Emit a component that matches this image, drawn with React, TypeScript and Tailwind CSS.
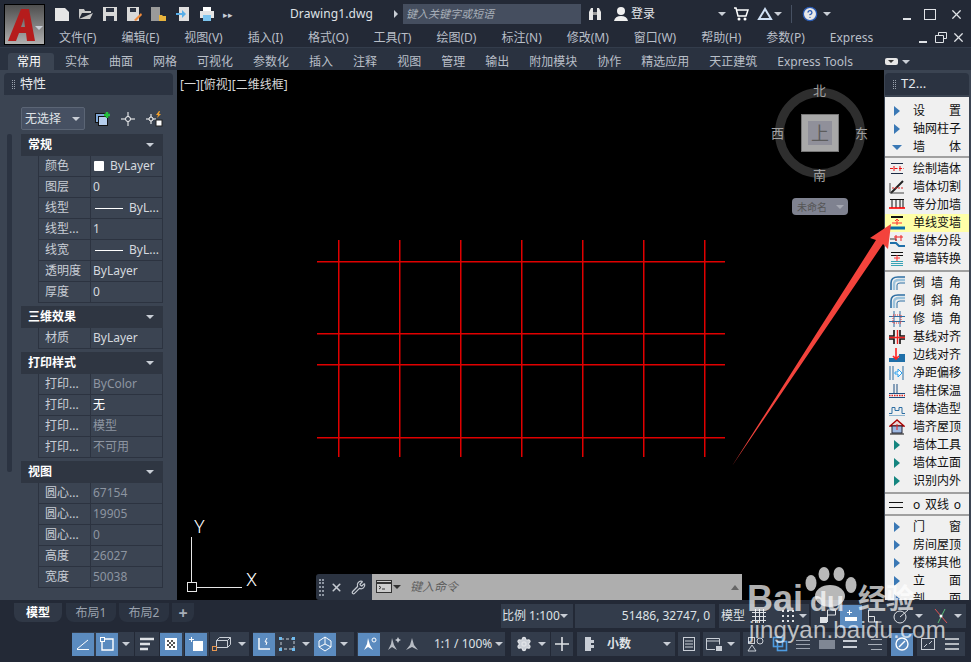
import type { ReactNode } from 'react';
import { HelpCircle, Settings, Wrench, X } from 'lucide-react';

const menus = ['文件(F)', '编辑(E)', '视图(V)', '插入(I)', '格式(O)', '工具(T)', '绘图(D)', '标注(N)', '修改(M)', '窗口(W)', '帮助(H)', '参数(P)', 'Express'];
const tabs = ['实体', '曲面', '网格', '可视化', '参数化', '插入', '注释', '视图', '管理', '输出', '附加模块', '协作', '精选应用', '天正建筑', 'Express Tools'];

type Prop = { label: string; value: string; tone?: string; kind?: 'swatch' | 'line' };
const sections: { title: string; rows: Prop[] }[] = [
  {
    title: '常规',
    rows: [
      { label: '颜色', value: 'ByLayer', kind: 'swatch' },
      { label: '图层', value: '0' },
      { label: '线型', value: 'ByL...', kind: 'line' },
      { label: '线型...', value: '1' },
      { label: '线宽', value: 'ByL...', kind: 'line' },
      { label: '透明度', value: 'ByLayer' },
      { label: '厚度', value: '0' },
    ],
  },
  { title: '三维效果', rows: [{ label: '材质', value: 'ByLayer' }] },
  {
    title: '打印样式',
    rows: [
      { label: '打印...', value: 'ByColor', tone: 'text-[#8d95a1]' },
      { label: '打印...', value: '无', tone: 'text-white' },
      { label: '打印...', value: '模型', tone: 'text-[#8d95a1]' },
      { label: '打印...', value: '不可用', tone: 'text-[#8d95a1]' },
    ],
  },
  {
    title: '视图',
    rows: [
      { label: '圆心...', value: '67154', tone: 'text-[#8d95a1]' },
      { label: '圆心...', value: '19905', tone: 'text-[#8d95a1]' },
      { label: '圆心...', value: '0', tone: 'text-[#8d95a1]' },
      { label: '高度', value: '26027', tone: 'text-[#8d95a1]' },
      { label: '宽度', value: '50038', tone: 'text-[#8d95a1]' },
    ],
  },
];

function Caret({ className = '' }: { className?: string }) {
  return <span className={`inline-block h-0 w-0 border-x-[4px] border-t-[4px] border-x-transparent border-t-[#c9ced6] ${className}`} />;
}

function I({ w = 16, h = 16, children }: { w?: number; h?: number; children: ReactNode }) {
  return (
    <svg width={w} height={h} viewBox={`0 0 ${w} ${h}`} fill="none" className="shrink-0">
      {children}
    </svg>
  );
}

function SectionBlock({ title, rows }: { title: string; rows: Prop[] }) {
  return (
    <div className="mb-[3px]">
      <div className="flex h-[22px] items-center justify-between bg-[#2f3642] pl-[7px] pr-[9px] text-[12px] font-bold text-white">
        {title}
        <Caret />
      </div>
      <div className="ml-[17px] border-l border-[#2c3340]">
        {rows.map((r, i) => (
          <div key={i} className="flex h-[21px] items-center border-b border-r border-[#2c3340] text-[12px] leading-none">
            <div className="w-[51px] shrink-0 whitespace-nowrap pl-[6px] text-[#c9ced6]">{r.label}</div>
            <div className={`flex h-full flex-1 items-center gap-[6px] whitespace-nowrap border-l border-[#2c3340] pl-[2px] ${r.tone ?? 'text-[#d5d9df]'}`}>
              {r.kind === 'swatch' && <span className="ml-[1px] h-[10px] w-[10px] rounded-[1px] bg-white" />}
              {r.kind === 'line' && <span className="ml-[2px] h-px w-[28px] bg-white" />}
              {r.value}
            </div>
          </div>
        ))}
      </div>
    </div>
  );
}

function PropertiesPanel() {
  return (
    <aside className="flex w-[177px] shrink-0 flex-col px-[4px] pt-[3px]">
      <div className="flex h-[22px] items-center gap-[5px] rounded-t-[4px] bg-[#2b3341] pl-[8px] text-[13px] text-[#e4e7eb]">
        <span className="h-[9px] w-[3px] border-x border-dotted border-[#9aa2ad]" />
        特性
      </div>
      <div className="flex-1 rounded-t-[4px] bg-[#3b4452] pl-[3px] pr-[10px] pt-[12px]">
        <div className="flex items-center pl-[14px]">
          <div className="flex h-[23px] w-[70px] items-center justify-between rounded-[2px] border border-[#5b6575] bg-[#465062] pl-[3px] pr-[4px] text-[12px] text-[#dfe2e6]">
            无选择
            <Caret />
          </div>
          <div className="ml-[10px] flex items-center gap-[9px]">
            <I>
              <rect x="0.500" y="2.500" width="9" height="9" fill="#7fa6d6" stroke="#111" />
              <rect x="3.500" y="5.500" width="9" height="9" fill="#b5cdeb" stroke="#111" />
              <path d="M9 4h6M12 1v6" stroke="#25c13d" strokeWidth="2.400" />
            </I>
            <I>
              <circle cx="8" cy="8" r="2.500" stroke="#fff" />
              <path d="M8 1v4M8 11v4M1 8h4M11 8h4" stroke="#fff" />
            </I>
            <I w={18}>
              <circle cx="6" cy="8" r="2" stroke="#fff" />
              <path d="M6 3v3M6 10v3M1 8h3M8 8h3" stroke="#fff" />
              <path d="M14 0l-3 4h2l-1 3 4-4h-2l1-3z" fill="#f1a02c" />
              <rect x="11" y="9" width="6" height="6" fill="#fff" stroke="#222" />
            </I>
          </div>
        </div>
        <div className="mt-[4px] flex">
          <div className="mr-[9px] h-[338px] w-[5px] rounded-[2px] bg-[#2b3341]" />
          <div className="w-[142px]">
            {sections.map((s) => (
              <SectionBlock key={s.title} title={s.title} rows={s.rows} />
            ))}
          </div>
        </div>
      </div>
    </aside>
  );
}

const wallIcons: Record<string, ReactNode> = {
  draw: (
    <I>
      <path d="M2 2.500h12M2 12.500h12" stroke="#1b2a44" />
      <path d="M1 7.500h14" stroke="#e11" strokeDasharray="3 1.500" />
      <path d="M5 5v5M11 5v5" stroke="#e11" />
    </I>
  ),
  cut: (
    <I>
      <path d="M2 14L14 2" stroke="#222" strokeWidth="2" />
      <path d="M1 4v10h14" stroke="#444" />
      <path d="M3 9h12" stroke="#d22" strokeDasharray="2 1" />
    </I>
  ),
  add: (
    <I>
      <path d="M1 2.500h14M3 2v9M7 2v9M11 2v9M14 2v9" stroke="#111" />
      <path d="M0 11h16" stroke="#f00" strokeWidth="1.600" />
    </I>
  ),
  single: (
    <I>
      <path d="M2 2h12" stroke="#111" strokeWidth="2" />
      <path d="M8 4v6M6 6l2-2 2 2" stroke="#f33" />
      <path d="M3 8h10" stroke="#f33" />
      <path d="M0 13h16" stroke="#0a6ea8" strokeWidth="3" />
    </I>
  ),
  split: (
    <I>
      <path d="M1 10h6l3 3h6" stroke="#1f6fa8" strokeWidth="2" />
      <path d="M1 6h6v2" stroke="#333" />
      <path d="M7 2v6M12 2v6M5 4h9" stroke="#e22" />
    </I>
  ),
  curtain: (
    <I>
      <path d="M2 1.500h12M2 4.500h12" stroke="#111" />
      <path d="M8 4v6M5 7h6" stroke="#f33" />
      <path d="M2 10.500h12M2 12.500h12M2 14.500h12" stroke="#39a3b5" />
    </I>
  ),
  corner: (
    <I>
      <path d="M2 15V8Q2 2 9 2h7" stroke="#2d6ea3" strokeWidth="1.600" />
      <path d="M5 15V9Q5 5 10 5h6" stroke="#9cc3dc" strokeWidth="2.400" />
      <path d="M8 15V10Q8 8 11 8h5" stroke="#2d6ea3" />
    </I>
  ),
  trim: (
    <I>
      <path d="M5 0v16M11 0v16M0 5.500h16M0 10.500h16" stroke="#2d6ea3" />
      <rect x="4" y="4" width="8" height="8" stroke="#e33" strokeDasharray="1 1" />
    </I>
  ),
  base: (
    <I>
      <path d="M5 1v6H0M11 1v6h5M5 15V10H0M11 15V10h5" stroke="#111" strokeWidth="1.600" />
      <path d="M8.500 1v14M0 8.500h16" stroke="#e22" strokeWidth="1.400" />
    </I>
  ),
  edge: (
    <I>
      <path d="M0 11h10V7h6v8H0z" fill="#1f6fa8" />
      <path d="M7 1v11M4 9l3 3 3-3" stroke="#f22" strokeWidth="1.600" />
    </I>
  ),
  offset: (
    <I>
      <path d="M1 1v14M4 1v14M14 1v14" stroke="#2d6ea3" />
      <path d="M6 7h3V4l4 4-4 4V9H6z" stroke="#29a0ee" fill="#fff" />
    </I>
  ),
  insulate: (
    <I>
      <path d="M5 1v10M8 1v10" stroke="#1f4f80" />
      <path d="M0 10.500h16" stroke="#1f4f80" />
      <path d="M0 12.500h16" stroke="#d22" strokeWidth="1.400" strokeDasharray="1.500 1" />
      <path d="M0 14.500h16" stroke="#1f4f80" />
    </I>
  ),
  shape: (
    <I>
      <path d="M0 12.500h3V6.500h3v3h4v-3h3v6h3" stroke="#2d6ea3" />
      <path d="M0 14.500h16" stroke="#8fb5d0" />
    </I>
  ),
  roof: (
    <I>
      <path d="M8 1L1 7h14z" fill="#e8d5d5" stroke="#a00" strokeWidth="1.400" />
      <rect x="3" y="7" width="10" height="7" fill="#9db7e0" stroke="#223" />
      <path d="M1 15h14" stroke="#111" />
      <path d="M8 5v6" stroke="#e22" />
    </I>
  ),
};

type Item = { t: string; caret?: 'blue' | 'down' | 'teal'; icon?: string; hl?: boolean };
const wallGroups: { pad: string; items: Item[] }[] = [
  {
    pad: '',
    items: [
      { t: '设置', caret: 'blue' },
      { t: '轴网柱子', caret: 'blue' },
      { t: '墙体', caret: 'down' },
    ],
  },
  {
    pad: 'pb-[2px]',
    items: [
      { t: '绘制墙体', icon: 'draw' },
      { t: '墙体切割', icon: 'cut' },
      { t: '等分加墙', icon: 'add' },
      { t: '单线变墙', icon: 'single', hl: true },
      { t: '墙体分段', icon: 'split' },
      { t: '幕墙转换', icon: 'curtain' },
    ],
  },
  {
    pad: 'pb-[2px]',
    items: [
      { t: '倒墙角', icon: 'corner' },
      { t: '倒斜角', icon: 'corner' },
      { t: '修墙角', icon: 'trim' },
      { t: '基线对齐', icon: 'base' },
      { t: '边线对齐', icon: 'edge' },
      { t: '净距偏移', icon: 'offset' },
      { t: '墙柱保温', icon: 'insulate' },
      { t: '墙体造型', icon: 'shape' },
      { t: '墙齐屋顶', icon: 'roof' },
      { t: '墙体工具', caret: 'teal' },
      { t: '墙体立面', caret: 'teal' },
      { t: '识别内外', caret: 'teal' },
    ],
  },
];
const bottomItems: Item[] = [
  { t: '门窗', caret: 'blue' },
  { t: '房间屋顶', caret: 'blue' },
  { t: '楼梯其他', caret: 'blue' },
  { t: '立面', caret: 'blue' },
  { t: '剖面', caret: 'blue' },
];

function WallRow({ item }: { item: Item }) {
  return (
    <div className={`flex h-[18px] items-center text-[12px] leading-none text-[#111] ${item.hl ? 'bg-[#ffffa8]' : ''}`}>
      <div className="flex w-[24px] shrink-0 items-center justify-center">
        {item.icon && wallIcons[item.icon]}
        {item.caret === 'blue' && <span className="h-0 w-0 border-y-[5px] border-l-[6px] border-y-transparent border-l-[#3a78b5]" />}
        {item.caret === 'teal' && <span className="h-0 w-0 border-y-[5px] border-l-[6px] border-y-transparent border-l-[#14857f]" />}
        {item.caret === 'down' && <span className="h-0 w-0 border-x-[5px] border-t-[5px] border-x-transparent border-t-[#3a78b5]" />}
      </div>
      <div className="ml-[4px] flex w-[48px] justify-between">
        {Array.from(item.t).map((c, i) => (
          <span key={i}>{c}</span>
        ))}
      </div>
    </div>
  );
}

function ToolPanel() {
  return (
    <aside className="flex h-full w-[87px] shrink-0 flex-col pl-[1px] pr-[2px] pt-[3px]">
      <div className="flex h-[22px] shrink-0 items-center gap-[5px] rounded-t-[4px] bg-[#2b3341] pl-[8px] text-[13px] text-[#e4e7eb]">
        <span className="h-[9px] w-[3px] border-x border-dotted border-[#9aa2ad]" />
        T2...
      </div>
      <div className="mt-[2px] flex-1 overflow-hidden bg-[#f0f0f0] pt-[5px]">
        {wallGroups.map((g, i) => (
          <div key={i} className={`mb-[2px] border-b-2 border-[#a0a0a0] ${g.pad}`}>
            {g.items.map((it) => (
              <WallRow key={it.t} item={it} />
            ))}
          </div>
        ))}
        <div className="mb-[2px] flex h-[20px] items-center border-b-2 border-[#a0a0a0] text-[12px] leading-none text-[#111]">
          <span className="ml-[4px] h-[6px] w-[14px] border-y border-[#111]" />
          <span className="ml-[10px] flex w-[48px] justify-between">
            <span>o</span>
            <span>双线</span>
            <span>o</span>
          </span>
        </div>
        {bottomItems.map((it) => (
          <WallRow key={it.t} item={it} />
        ))}
      </div>
    </aside>
  );
}

function ViewCube() {
  return (
    <div className="absolute left-[591px] top-[11px] h-[135px] w-[104px] text-[13px] leading-none text-[#a0a0a0]">
      <div className="absolute left-[7px] top-[7px] h-[90px] w-[90px] rounded-full border-[9px] border-[#2e2e2e]" />
      <div className="absolute left-[33px] top-[33px] flex h-[38px] w-[38px] items-center justify-center border border-[#777] bg-[#a8a8a8]">
        <div className="flex h-[24px] w-[24px] items-center justify-center bg-[#90909a] text-[18px] text-[#5c5c5c]">上</div>
      </div>
      <span className="absolute left-[45px] top-[3px]">北</span>
      <span className="absolute left-[45px] top-[88px]">南</span>
      <span className="absolute left-[3px] top-[46px]">西</span>
      <span className="absolute left-[87px] top-[46px]">东</span>
      <div className="absolute left-[24px] top-[117px] flex h-[17px] w-[56px] items-center justify-between rounded-[4px] bg-[#7f8290] pl-[5px] pr-[4px] text-[10px] text-[#555]">
        未命名
        <span className="h-0 w-0 border-x-[4px] border-t-[4px] border-x-transparent border-t-[#a5a8b2]" />
      </div>
    </div>
  );
}

function CommandLine() {
  return (
    <div className="absolute bottom-0 left-[139px] flex h-[26px] w-[426px]">
      <div className="flex w-[56px] items-center gap-[6px] rounded-l-[3px] bg-[#2b3341] pl-[3px] text-[#c5cad1]">
        <span className="h-[17px] w-[5px] border-x-2 border-dotted border-[#8e96a2]" />
        <X size={13} strokeWidth={3} />
        <Wrench size={15} className="ml-[2px]" />
      </div>
      <div className="flex flex-1 items-center bg-[#aeaeae] pl-[4px] pr-[3px] text-[12px] text-[#5e5e5e]">
        <I>
          <rect x="0.500" y="1.500" width="15" height="12" fill="#ccc" stroke="#333" />
          <path d="M1 4h14" stroke="#333" strokeWidth="2" />
          <path d="M3 7l2 1.500L3 10M6 10h3" stroke="#333" />
        </I>
        <span className="ml-[1px] h-0 w-0 border-x-[4px] border-t-[4px] border-x-transparent border-t-[#333]" />
        <span className="ml-[9px] flex-1 italic">键入命令</span>
        <span className="h-0 w-0 border-x-[4px] border-b-[5px] border-x-transparent border-b-[#666]" />
      </div>
    </div>
  );
}

function Canvas() {
  return (
    <main className="relative flex-1 bg-black">
      <div className="px-[3px] pt-[9px] text-[12px] leading-none text-[#d8d8d8]">[一][俯视][二维线框]</div>
      <svg width="707" height="530" viewBox="177 70 707 530" className="absolute left-0 top-0">
        {[261, 333, 364, 437].map((y) => (
          <line key={y} x1="317" x2="725" y1={y + 0.75} y2={y + 0.75} stroke="#e00000" strokeWidth="1.500" />
        ))}
        {[338, 399, 460, 521, 582, 643, 704].map((x) => (
          <line key={x} x1={x + 0.75} x2={x + 0.75} y1="240" y2="457" stroke="#e00000" strokeWidth="1.500" />
        ))}
        <path d="M191.500 537v50M192 587.500h50" stroke="#e6e6e6" />
        <rect x="187.500" y="582.500" width="9" height="9" stroke="#e6e6e6" />
        <text x="194" y="533" fontSize="18" fontWeight="300" fill="#fff" fontFamily="Roboto">Y</text>
        <text x="246" y="586" fontSize="18" fontWeight="300" fill="#fff" fontFamily="Roboto">X</text>
      </svg>
      <ViewCube />
      <CommandLine />
    </main>
  );
}

function Bt({ on, w = 22, children }: { on?: boolean; w?: number; children?: ReactNode }) {
  return <div className={`flex h-[23px] shrink-0 items-center justify-center ${on ? 'bg-[#5b8bbf]' : ''}`} style={{ width: w }}>{children}</div>;
}

function Grp({ className = '', children }: { className?: string; children: ReactNode }) {
  return <div className={`flex h-[24px] shrink-0 items-center whitespace-nowrap bg-[#333c4b] ${className}`}>{children}</div>;
}

function BottomBars() {
  return (
    <footer className="h-[62px] shrink-0 text-[12px] text-[#dfe2e6]">
      <div className="flex h-[32px] items-start pt-[4px]">
        <div className="-mt-[1px] flex h-[19px] items-center pl-[14px] text-[12px]">
          <div className="flex h-full w-[48px] items-center justify-center rounded-b-[8px] bg-[#303846] font-bold text-white">模型</div>
          <div className="ml-[4px] flex h-full w-[50px] items-center justify-center rounded-b-[8px] bg-[#2b3341] text-[#9aa2ae]">布局1</div>
          <div className="ml-[3px] flex h-full w-[50px] items-center justify-center rounded-b-[8px] bg-[#2b3341] text-[#9aa2ae]">布局2</div>
          <div className="ml-[3px] flex h-full w-[22px] items-center justify-center rounded-br-[8px] bg-[#2b3341] text-[16px] font-bold text-[#a7aeb8]">+</div>
        </div>
        <div className="ml-[307px] flex gap-[2px]">
          <Grp className="w-[72px] justify-between pl-[1px] pr-[5px]">比例 1:100<Caret /></Grp>
          <Grp className="w-[140px] justify-end pr-[5px]">51486, 32747, 0</Grp>
          <Grp className="ml-[2px] w-[90px] pl-[2px]">
            模型
            <span className="ml-[6px] shrink-0">
              <I>
                <path d="M1 4.500h14M1 8.500h14M1 12.500h14M4.500 1v14M8.500 1v14M12.500 1v14" stroke="#dfe2e6" />
              </I>
            </span>
            <span className="ml-[13px] shrink-0">
              <I>
                <path d="M2 3h12M2 8h12M2 13h12" stroke="#dfe2e6" strokeWidth="2" strokeDasharray="2 3" />
              </I>
            </span>
            <Caret className="ml-[3px] shrink-0" />
          </Grp>
          <Grp className="w-[155px] pl-[8px]">
            <I w={20}>
              <rect x="1" y="9" width="7" height="6" fill="#dfe2e6" />
              <path d="M8.500 14V2h8v5h-8" stroke="#dfe2e6" />
            </I>
            <span className="ml-[1px]">
              <Bt on>
                <I>
                  <path d="M6.500 2v5M4 4.500h5" stroke="#fff" />
                  <rect x="2" y="9" width="12" height="4" fill="#fff" />
                </I>
              </Bt>
            </span>
            <span className="ml-[4px]">
              <I>
                <path d="M2.500 2v12h13M2.500 8.500h6v5.500" stroke="#dfe2e6" />
              </I>
            </span>
            <span className="ml-[11px]">
              <I>
                <circle cx="7" cy="9" r="6" stroke="#dfe2e6" />
                <path d="M7 9l8-7" stroke="#dfe2e6" />
              </I>
            </span>
            <Caret className="ml-[6px]" />
            <span className="ml-[10px]">
              <I>
                <path d="M2 1l12 14" stroke="#e05252" />
                <path d="M12 1L5 15" stroke="#5ac27a" />
                <circle cx="8" cy="8" r="1.500" fill="#fff" />
              </I>
            </span>
            <Caret className="ml-[5px]" />
          </Grp>
        </div>
      </div>
      <div className="flex items-center pl-[72px]">
        <Grp className="w-[62px]">
          <Bt on>
            <I>
              <path d="M2 13.500h12M2 13L13 4" stroke="#fff" />
            </I>
          </Bt>
          <span className="ml-[2px]">
            <Bt on>
              <I>
                <path d="M6 3h8v11H3V6" stroke="#fff" strokeWidth="1.400" />
                <rect x="1.500" y="1.500" width="4" height="4" stroke="#fff" />
              </I>
            </Bt>
          </span>
          <Caret className="ml-[4px]" />
        </Grp>
        <Grp className="ml-[1px] w-[24px] justify-center">
          <I>
            <path d="M1 3h14M1 8h10M1 13h8" stroke="#dfe2e6" strokeWidth="2.600" />
          </I>
        </Grp>
        <Grp className="ml-[1px] w-[24px]">
          <Bt on>
            <I>
              <rect x="2" y="2" width="12" height="12" fill="#fff" />
              <path d="M4 4h2v2H4zM8 4h2v2H8zM6 6h2v2H6zM10 6h2v2h-2zM4 8h2v2H4zM8 8h2v2H8zM6 10h2v2H6zM10 10h2v2h-2z" fill="#555" />
            </I>
          </Bt>
        </Grp>
        <Grp className="ml-[1px] w-[24px]">
          <Bt on>
            <I>
              <rect x="5" y="5" width="10" height="10" fill="#fff" />
              <path d="M1 3.500h5M3.500 1v5" stroke="#fff" />
            </I>
          </Bt>
        </Grp>
        <Grp className="ml-[1px] w-[39px] pl-[1px]">
          <I w={22}>
            <path d="M5.500 4.500h11v7h-11zM5.500 4.500l3-3h11l-3 3M16.500 11.500l3-3v-7" stroke="#c9ced6" />
            <rect x="1.500" y="10.500" width="4" height="4" stroke="#e8964f" />
          </I>
          <Caret className="ml-[5px]" />
        </Grp>
        <Grp className="ml-[4px] w-[101px]">
          <Bt on>
            <I>
              <path d="M3 2v11h11" stroke="#fff" strokeWidth="1.400" />
              <path d="M11 2l-2 4h2l-1 3" stroke="#fff" />
            </I>
          </Bt>
          <span className="ml-[3px]">
            <I w={20}>
              <rect x="3" y="3" width="13" height="10" stroke="#c9ced6" strokeDasharray="3 2" />
              <path d="M1 1h3v3H1zM14 1h3v3h-3zM1 12h3v3H1zM14 12h3v3h-3z" fill="#6fbcf0" />
            </I>
          </span>
          <Caret className="ml-[4px]" />
          <span className="ml-[4px]">
            <Bt on>
              <I>
                <path d="M8 1l6 4v6l-6 4-6-4V5zM8 8V1M8 8l6 3M8 8l-6 3" stroke="#fff" />
              </I>
            </Bt>
          </span>
          <Caret className="ml-[4px]" />
        </Grp>
        <Grp className="ml-[3px] w-[148px] pl-[1px]">
          <Bt on>
            <I>
              <path d="M7 2l2 7 3 5-5-3-4 3 3-6z" fill="#fff" />
              <circle cx="13" cy="4" r="2" stroke="#fff" />
            </I>
          </Bt>
          <span className="ml-[5px]">
            <I>
              <path d="M7 2l2 7 3 5-5-3-4 3 3-6z" fill="#b7bcc4" />
              <path d="M13 1l1 2 2 1-2 1-1 2-1-2-2-1 2-1z" fill="#c9ced6" />
            </I>
          </span>
          <span className="ml-[3px]">
            <I>
              <path d="M8 2l2 7 4 5-6-3-6 3 4-5z" fill="#b7bcc4" />
            </I>
          </span>
          <span className="ml-[14px]">1:1 / 100%</span>
          <Caret className="ml-[3px]" />
        </Grp>
        <Grp className="ml-[6px] w-[39px] justify-center gap-[6px]">
          <Settings size={16} fill="#c9ced6" />
          <Caret />
        </Grp>
        <Grp className="ml-[1px] w-[22px] justify-center">
          <I>
            <path d="M8 1v14M1 8h14" stroke="#dfe2e6" strokeWidth="1.600" />
          </I>
        </Grp>
        <Grp className="ml-[4px] w-[98px] pl-[7px]">
          <I w={12}>
            <path d="M1 1h6v3h3v3H7v2h3v3H7v3H1z" fill="#c9ced6" />
          </I>
          <span className="ml-[11px] flex-1 font-bold">小数</span>
          <Caret className="mr-[4px]" />
        </Grp>
        <Grp className="ml-[3px] w-[22px] justify-center">
          <I>
            <rect x="2.500" y="1.500" width="11" height="13" stroke="#c9ced6" />
            <path d="M4 5h8M4 8h8M4 11h8" stroke="#c9ced6" />
          </I>
        </Grp>
        <Grp className="ml-[3px] w-[37px] pl-[2px]">
          <I w={20}>
            <path d="M10 13.500H1.500v-11h13v6M1 5h14" stroke="#c9ced6" />
            <rect x="11" y="10" width="6" height="5" fill="#c9ced6" />
          </I>
          <Caret className="ml-[2px]" />
        </Grp>
        <Grp className="ml-[3px] w-[144px] pl-[2px]">
          <I w={20}>
            <rect x="3.500" y="1.500" width="6" height="6" stroke="#c9ced6" />
            <circle cx="15" cy="5" r="3" stroke="#c9ced6" />
            <path d="M7 9l4 6H3z" stroke="#c9ced6" />
          </I>
          <span className="ml-[7px]">
            <I>
              <rect x="1.500" y="1.500" width="9" height="9" stroke="#4d9be0" strokeWidth="1.600" />
              <rect x="5.500" y="5.500" width="9" height="9" stroke="#4d9be0" strokeWidth="1.600" />
            </I>
          </span>
          <span className="ml-[7px]">
            <I>
              <path d="M1 4.500h14M1 8.500h14M1 12.500h14" stroke="#9aa2ae" />
            </I>
          </span>
          <span className="ml-[8px] h-[9px] w-[16px] bg-[#7f8794]" />
          <span className="ml-[7px]">
            <I>
              <path d="M1 5h14M1 11h14" stroke="#c9ced6" strokeWidth="2" />
            </I>
          </span>
          <span className="ml-[9px]">
            <I>
              <path d="M4 3.500h11M1 8.500h14M4 13.500h11" stroke="#a7aeb8" />
            </I>
          </span>
        </Grp>
        <span className="ml-[4px]">
          <Bt on>
            <I>
              <circle cx="8" cy="8" r="6" stroke="#fff" strokeWidth="1.400" />
              <path d="M5 11l6-6" stroke="#fff" strokeWidth="1.400" />
            </I>
          </Bt>
        </span>
        <Grp className="ml-[4px] w-[48px] pl-[3px]">
          <I>
            <rect x="1.500" y="2.500" width="13" height="11" stroke="#c9ced6" />
            <path d="M4 11l3-3M12 5L9 8" stroke="#c9ced6" />
          </I>
          <span className="ml-[8px]">
            <I>
              <path d="M1 3h14M1 8h14M1 13h14" stroke="#dfe2e6" strokeWidth="1.600" />
            </I>
          </span>
        </Grp>
      </div>
    </footer>
  );
}

function Overlays() {
  return (
    <>
      <svg width="971" height="662" viewBox="0 0 971 662" className="pointer-events-none absolute left-0 top-0">
        <path d="M891 224L888 249 883 244 732 466 876 240 870 238z" fill="#f3433c" />
        <g fill="#fff" fillOpacity="0.72">
          <ellipse cx="830" cy="596" rx="15" ry="11" />
          <ellipse cx="811" cy="583" rx="5.500" ry="8" />
          <ellipse cx="824" cy="574" rx="5.500" ry="7" />
          <ellipse cx="839" cy="574" rx="5.500" ry="7" />
          <ellipse cx="851" cy="585" rx="5.500" ry="8" />
        </g>
      </svg>
      <div className="pointer-events-none absolute left-[747px] top-[578px] font-['Liberation_Sans',sans-serif] text-[36px] font-bold leading-[42px] text-white/70">Bai</div>
      <div className="pointer-events-none absolute left-[810px] top-[586px] font-['Liberation_Sans',sans-serif] text-[28px] font-bold leading-[32px] text-white/70">du</div>
      <div className="pointer-events-none absolute left-[858px] top-[583px] text-[28px] font-bold leading-[30px] text-white/70">经验</div>
      <div className="pointer-events-none absolute left-[749px] top-[616px] font-['Liberation_Sans',sans-serif] text-[24px] leading-[28px] tracking-[0.2px] text-white/70">jingyan.baidu.com</div>
    </>
  );
}

export default function App() {
  return (
    <div className="relative flex h-[662px] w-[971px] flex-col overflow-hidden bg-[#232936] font-['Noto_Sans','Noto_Sans_CJK_SC',sans-serif] text-[12px] text-[#c9ced6]">
      {/* Title + menu */}
      <header className="flex h-[48px] shrink-0 border-b border-[#333c4b]">
        <div className="relative m-[4px] h-[41px] w-[41px] shrink-0 border border-black bg-gradient-to-b from-[#4f4f4f] to-[#b0b0b0]">
          <svg width="30" height="36" viewBox="0 0 30 36" className="absolute left-[2px] top-[2px]">
            <path d="M1 34L14 2h8l6 32h-8l-1-8h-7l-3 8zM14 20h4l-1-9z" fill="#b51c1c" fillRule="evenodd" />
          </svg>
          <Caret className="absolute bottom-[14px] right-[1px] border-t-[#222]" />
        </div>
        <div className="flex flex-1 flex-col">
          <div className="flex h-[28px] items-center">
            <div className="ml-[5px] flex w-[182px] items-center gap-[8px]">
              <I>
                <path d="M1 2h10l4 4v9H1z" fill="#e6e6e6" />
              </I>
              <I>
                <path d="M1 13V3h5l1 2h6v2H4l-3 6h11l3-6" fill="#c9c9c9" />
              </I>
              <I>
                <path d="M1 1h14v14H1z" fill="#d9d9d9" />
                <path d="M4 2h8v4H4zM4 10h8v5H4z" fill="#2a3140" />
              </I>
              <I>
                <path d="M1 1h12v14H1z" fill="#d9d9d9" />
                <path d="M4 2h6v4H4z" fill="#2a3140" />
                <path d="M8 14l7-7 1 2-6 6z" fill="#f08a3a" />
              </I>
              <I>
                <rect x="1" y="1" width="9" height="14" fill="#9a9a9a" />
                <path d="M9 9h3l1 1h3v5H9z" fill="#e7b33c" />
              </I>
              <span className="ml-[2px]">
                <I w={14}>
                  <rect x="3" y="1" width="10" height="14" fill="#e0e0e0" />
                  <path d="M0 7h6V4l4 4-4 4V9H0z" fill="#58aee8" />
                </I>
              </span>
              <span className="ml-[1px]">
                <I>
                  <path d="M4 1h8v4H4z" fill="#fff" />
                  <path d="M1 5h14v7H1z" fill="#e5e5e5" />
                  <path d="M4 9h8v6H4z" fill="#7cc4ee" />
                </I>
              </span>
              <span className="text-[9px] leading-none text-[#c9ced6]">▸▸</span>
            </div>
            <span className="ml-[54px] w-[104px] text-[12px] tracking-[0.1px] text-[#dfe2e6]">Drawing1.dwg</span>
            <span className="h-0 w-0 border-y-[4px] border-l-[4px] border-y-transparent border-l-[#c9ced6]" />
            <div className="ml-[5px] flex h-[20px] w-[178px] items-center bg-[#454e5f] pl-[3px] text-[11px] italic text-[#a7aeb8]">键入关键字或短语</div>
            <span className="ml-[6px]">
              <I>
                <path d="M2 14V6l2-4h2v12zM10 14V2h2l2 4v8z" fill="#e6e6e6" />
                <path d="M6 6h4v3H6z" fill="#999" />
              </I>
            </span>
            <span className="ml-[10px]">
              <I>
                <circle cx="8" cy="5" r="4" fill="#f0f0f0" />
                <path d="M1 15q1-5 7-5t7 5z" fill="#f0f0f0" />
              </I>
            </span>
            <span className="ml-[2px] text-[12px] text-[#e4e7eb]">登录</span>
            <Caret className="ml-[63px]" />
            <span className="ml-[7px]">
              <I>
                <path d="M1 2h2l2 8h8l2-6H4" stroke="#fff" strokeWidth="1.500" />
                <circle cx="6" cy="13" r="1.500" fill="#fff" />
                <circle cx="12" cy="13" r="1.500" fill="#fff" />
              </I>
            </span>
            <span className="ml-[8px]">
              <I>
                <path d="M8 3L2 13h12z" stroke="#cfe0f5" strokeWidth="2" />
              </I>
            </span>
            <Caret className="ml-[1px]" />
            <span className="ml-[9px] h-[18px] w-px bg-[#465062]" />
            <HelpCircle size={16} fill="#e8e8e8" stroke="#2a5bb5" className="ml-[10px]" />
            <Caret className="ml-[5px]" />
            <span className="ml-[72px] mt-[10px] h-[2px] w-[8px] bg-[#dfe2e6]" />
            <span className="ml-[13px] h-[11px] w-[12px] border-[1.500px] border-[#dfe2e6]" />
            <X size={15} className="ml-[13px] text-[#dfe2e6]" />
          </div>
          <div className="flex h-[19px] items-center pl-[10px]">
            <div className="flex w-[858px] gap-[25px]">
              {menus.map((m) => (
                <span key={m} className="whitespace-nowrap text-[12px] leading-none text-[#b9bfc8]">{m}</span>
              ))}
            </div>
            <span className="ml-[2px] mt-[8px] h-[2px] w-[8px] shrink-0 bg-[#dfe2e6]" />
            <span className="ml-[8px] flex h-[11px] w-[12px] shrink-0 items-end">
              <I w={12} h={11}>
                <path d="M3.500 3V.5h8v6H9M.5 3.500h8v7h-8z" stroke="#dfe2e6" />
              </I>
            </span>
            <X size={15} className="ml-[4px] shrink-0 text-[#dfe2e6]" />
          </div>
        </div>
      </header>

      {/* Ribbon tabs */}
      <nav className="flex h-[22px] shrink-0 items-end gap-[20px] bg-[#2a3240] pl-[17px] pr-[4px] text-[12px] leading-none text-[#b9bfc8]">
        <span className="-ml-[9px] -mr-[9px] flex h-[17px] items-center rounded-t-[3px] bg-[#3b4452] pl-[9px] pr-[13px] text-white">常用</span>
        {tabs.map((t) => (
          <span key={t} className="flex h-[17px] items-center whitespace-nowrap">{t}</span>
        ))}
        <span className="ml-[12px] flex h-[17px] items-center gap-[4px]">
          <span className="flex h-[7px] w-[13px] items-center justify-center rounded-[2px] bg-[#e6e6e6]">
            <span className="h-0 w-0 border-x-[3px] border-t-[3px] border-x-transparent border-t-[#333]" />
          </span>
          <Caret />
        </span>
      </nav>

      {/* Panels + drawing */}
      <div className="flex h-[530px] shrink-0 bg-[#3b4452]">
        <PropertiesPanel />
        <Canvas />
        <ToolPanel />
      </div>

      <BottomBars />
      <Overlays />
    </div>
  );
}
